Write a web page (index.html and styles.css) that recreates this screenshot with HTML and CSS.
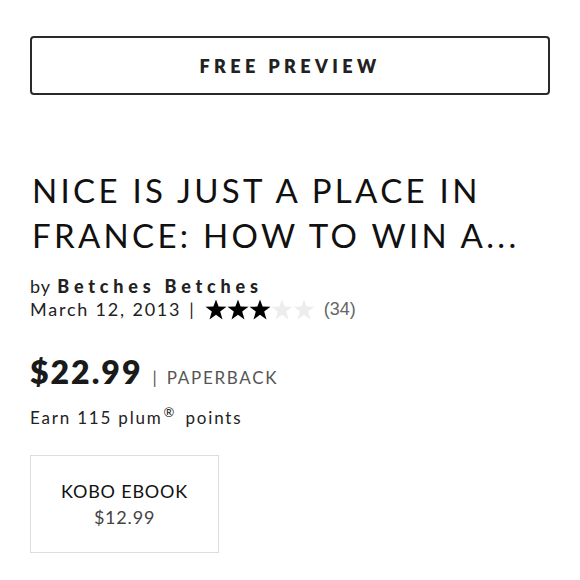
FILE: index.html
```html
<!DOCTYPE html>
<html>
<head>
<meta charset="utf-8">
<link rel="stylesheet" href="styles.css">
</head>
<body>
<main class="page">
  <div class="preview">FREE PREVIEW</div>
  <h1 class="title">NICE IS JUST A PLACE IN FRANCE: HOW TO WIN A...</h1>
  <div class="author">by <span class="author-name">Betches Betches</span></div>
  <div class="meta">
    <span class="date">March 12, 2013</span>
    <span class="sep">|</span>
    <svg class="stars" width="111" height="21" viewBox="0 0 111 21" aria-label="3 out of 5 stars">
      <defs>
        <polygon id="st" points="11,0.5 13.6,7.6 21.5,7.8 15.2,12.6 17.5,20.5 11,15.8 4.5,20.5 6.8,12.6 0.5,7.8 8.4,7.6"/>
      </defs>
      <use href="#st" x="0" fill="#000"/>
      <use href="#st" x="22" fill="#000"/>
      <use href="#st" x="44" fill="#000"/>
      <use href="#st" x="66" fill="#ededed"/>
      <use href="#st" x="88" fill="#ededed"/>
    </svg>
    <span class="count">(34)</span>
  </div>
  <div class="price-row">
    <span class="price">$22.99</span>
    <span class="sep2">|</span>
    <span class="format">PAPERBACK</span>
  </div>
  <div class="points">Earn 115 plum<sup class="reg">®</sup> points</div>
  <div class="format-card">
    <div class="fc-name">KOBO EBOOK</div>
    <div class="fc-price">$12.99</div>
  </div>
</main>
</body>
</html>
```

FILE: styles.css
```css
html, body {
  margin: 0;
  padding: 0;
  background: #fff;
}
.page {
  padding: 36px 30px 0 30px;
  font-family: Lato, "Noto Sans", sans-serif;
  color: #111;
}
.preview {
  height: 55px;
  border: 2px solid #2a2a2a;
  border-radius: 4px;
  display: flex;
  align-items: center;
  justify-content: center;
  font-weight: 800;
  font-size: 18px;
  letter-spacing: 4.4px;
  color: #222;
}
.title {
  margin: 73px 0 0 2px;
  font-weight: 400;
  font-size: 33px;
  line-height: 45px;
  letter-spacing: 3.3px;
  color: #111;
  width: 520px;
}
.author {
  margin-top: 17px;
  font-size: 18px;
  line-height: 22px;
  letter-spacing: 1px;
  color: #222;
}
.author-name {
  font-weight: 900;
  letter-spacing: 4.8px;
  margin-left: 1px;
}
.meta {
  display: flex;
  align-items: center;
  gap: 8px;
  font-size: 18px;
  line-height: 24px;
  letter-spacing: 1.8px;
  color: #222;
}
.stars {
  display: block;
  margin-left: 1px;
}
.count {
  font-family: "Liberation Sans", sans-serif;
  font-size: 18px;
  color: #666;
  letter-spacing: 0;
}
.price-row {
  margin-top: 31px;
  display: flex;
  align-items: baseline;
  gap: 10px;
}
.price {
  font-weight: 800;
  font-size: 32px;
  line-height: 40px;
  letter-spacing: 2px;
  color: #1a1a1a;
}
.sep2 {
  font-size: 17px;
  color: #555;
}
.format {
  font-size: 17px;
  letter-spacing: 1.7px;
  color: #555;
}
.points {
  margin-top: 15px;
  font-size: 17px;
  line-height: 22px;
  letter-spacing: 1.8px;
  color: #222;
}
.reg {
  font-size: 13px;
  line-height: 0;
  letter-spacing: 0;
  margin: 0 5px 0 1px;
}
.format-card {
  margin-top: 26px;
  width: 187px;
  height: 96px;
  border: 1.5px solid #ddd;
  display: flex;
  flex-direction: column;
  align-items: center;
  justify-content: center;
}
.fc-name {
  font-size: 18px;
  line-height: 26px;
  letter-spacing: 0.8px;
  color: #111;
}
.fc-price {
  font-size: 18px;
  line-height: 26px;
  color: #444;
  letter-spacing: 0.8px;
}
```
